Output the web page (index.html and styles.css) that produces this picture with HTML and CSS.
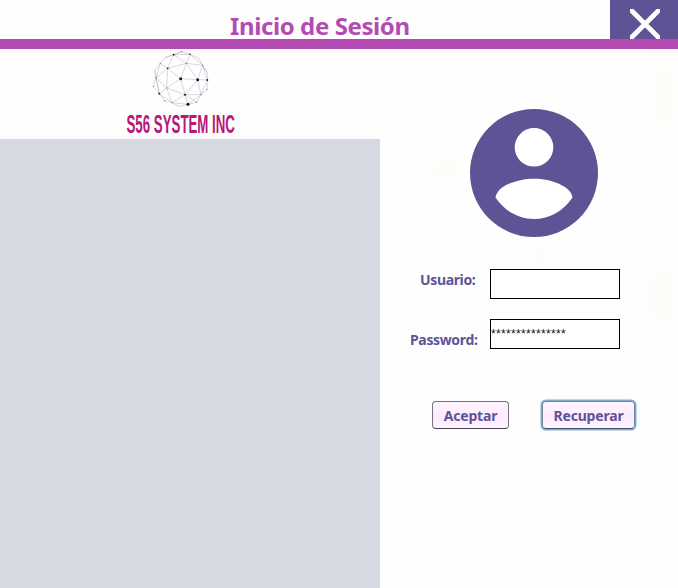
FILE: index.html
```html
<!DOCTYPE html>
<html lang="es">
<head>
<meta charset="utf-8">
<title>Inicio de Sesión</title>
<link rel="stylesheet" href="styles.css">
</head>
<body>
<div class="window">
  <header class="titlebar">
    <h1 class="title">Inicio de Sesión</h1>
    <button class="close" type="button" aria-label="Cerrar">
      <svg width="30" height="30" viewBox="0 0 30 30"><path d="M-1-1 31 31M31-1-1 31" stroke="#fff" stroke-width="4.8"/></svg>
    </button>
  </header>
  <main class="content">
    <section class="brand">
      <div class="logo">
        <svg class="sphere" width="60" height="58" viewBox="120 15 180 174">
          <g fill="none" stroke="#a797b3" stroke-width="1.2">
            <path d="M215 20 240 28 266 39 278 61 292 83 292 105 291 133 273 149 260 172 234 178 209 185 186 173 164 167 148 146 130 124 138 99 134 75 151 55 165 38 191 29Z"/>
            <path d="M151 55 173 70 191 29 229 55 240 28 191 29 165 38M215 20 191 29M173 70 138 99 151 55M173 70 229 55 278 61 240 28M173 70 212 101 229 55 263 104 278 61 292 105 263 104 212 101 170 129 173 70M138 99 170 129 148 146 138 99M134 75 148 146M170 129 225 149 212 101M225 149 263 104 273 149 225 149 234 178 186 173 170 129M148 146 186 173 225 149 260 172M273 149 292 105M273 149 234 178M278 61 292 83"/>
          </g>
          <g fill="#17132a">
            <circle cx="212" cy="101" r="4.5"/><circle cx="263" cy="104" r="4.5"/><circle cx="234" cy="178" r="4.5"/>
            <circle cx="225" cy="149" r="3"/><circle cx="148" cy="146" r="2.8"/><circle cx="292" cy="105" r="2.8"/>
            <circle cx="173" cy="70" r="2.5"/><circle cx="191" cy="29" r="2.6"/><circle cx="240" cy="28" r="2.2"/>
          </g>
          <g fill="#77707f">
            <circle cx="229" cy="55" r="2"/><circle cx="151" cy="55" r="1.9"/><circle cx="138" cy="99" r="2"/><circle cx="170" cy="129" r="1.8"/>
            <circle cx="130" cy="124" r="1.8"/><circle cx="164" cy="167" r="1.8"/><circle cx="186" cy="173" r="1.6"/><circle cx="260" cy="172" r="1.8"/>
            <circle cx="273" cy="149" r="1.8"/><circle cx="291" cy="133" r="1.8"/><circle cx="278" cy="61" r="1.6"/><circle cx="215" cy="20" r="1.8"/>
          </g>
        </svg>
        <svg class="wordmark" width="120" height="29" viewBox="0 0 120 29">
          <text transform="translate(6.500 23) scale(.58 1)" textLength="187" lengthAdjust="spacingAndGlyphs">S56 SYSTEM INC</text>
        </svg>
      </div>
      <div class="panel"></div>
    </section>
    <form class="login">
      <svg class="avatar" width="128" height="128" viewBox="0 0 128 128">
        <circle cx="64" cy="64" r="64" fill="#5f5395"/>
        <circle cx="64" cy="38.3" r="19.3" fill="#fff"/>
        <path d="M25.5 88.500C27 77 47 69.700 64 69.700S101 77 102.500 88.500C93.500 102 79.500 110 64 110S34.500 102 25.500 88.500Z" fill="#fff"/>
      </svg>
      <div class="field user">
        <label for="user">Usuario:</label>
        <input id="user" type="text">
      </div>
      <div class="field pass">
        <label for="pass">Password:</label>
        <input id="pass" type="text" value="***************">
      </div>
      <div class="actions">
        <button class="btn accept" type="button">Aceptar</button>
        <button class="btn recover" type="button">Recuperar</button>
      </div>
    </form>
  </main>
</div>
</body>
</html>
```
FILE: styles.css
```css
* { box-sizing: border-box; }
body { margin: 0; background: #fefefe; font-family: "Noto Sans", sans-serif; }
.window { width: 678px; height: 588px; overflow: hidden; display: flex; flex-direction: column; }
.titlebar { height: 49px; display: flex; justify-content: space-between; border-bottom: 10px solid #b44bb3; }
.title { margin: 0; padding: 9px 0 0 230px; font-size: 24px; line-height: 33px; font-weight: 700; letter-spacing: -.4px; color: #b44bb3; white-space: nowrap; }
.close { width: 68px; height: 39px; padding: 9px 0 0 20px; border: 0; background: #5f5395; }
.close svg { display: block; }
.content { flex: 1; display: grid; grid-template-columns: 380px 298px; }
.brand { display: flex; flex-direction: column; }
.logo { height: 90px; padding-top: 1px; display: flex; flex-direction: column; align-items: center; }
.sphere { flex: none; margin-left: -20px; }
.wordmark { flex: none; overflow: visible; margin: 2px 20px 0 0; font: bold 25px "Liberation Sans Narrow", "Liberation Sans", sans-serif; fill: #b81777; }
.panel { flex: 1; background: #d6d9e2; }
.login {
  padding-top: 60px;
  background:
    radial-gradient(ellipse 22px 50px at 284px 45px, #fcfcf7, transparent),
    radial-gradient(ellipse 26px 18px at 66px 121px, #fcfcf6, transparent),
    radial-gradient(ellipse 20px 40px at 282px 245px, #fbfcf6, transparent),
    radial-gradient(ellipse 9px 22px at 162px 206px, #fcfcf7, transparent),
    #fefefe;
}
.avatar { display: block; margin-left: 90px; }
.field { display: grid; grid-template-columns: 1fr 130px; height: 30px; margin-right: 58px; }
.field label { font-size: 14px; line-height: 20px; font-weight: 700; letter-spacing: -.35px; color: #5f5395; white-space: nowrap; }
.field input { width: 130px; height: 30px; padding: 0; border: 1px solid #000; border-radius: 0; background: #fff; font: 12px "Liberation Sans", sans-serif; letter-spacing: .33px; color: #111; outline: 0; }
.user { margin-top: 32px; padding-left: 40px; }
.user label { padding-top: 1px; }
.pass { margin-top: 20px; padding-left: 30px; }
.pass label { padding-top: 11px; }
.actions { display: flex; gap: 33px; margin: 52px 0 0 52px; }
.btn { height: 28px; padding: 1px 0 0; border: 1px solid #77727d; border-bottom-color: #4c4354; border-radius: 4px; background: linear-gradient(#fff5ff, #fdeaff 60%, #fff5ff); font: 700 14px/25px "Noto Sans", sans-serif; letter-spacing: -.2px; color: #5f5395; white-space: nowrap; }
.accept { width: 77px; }
.recover { width: 93px; border-color: #6c86a0; border-bottom-color: #45506a; box-shadow: 0 0 0 1.5px #83abc9; }
```
